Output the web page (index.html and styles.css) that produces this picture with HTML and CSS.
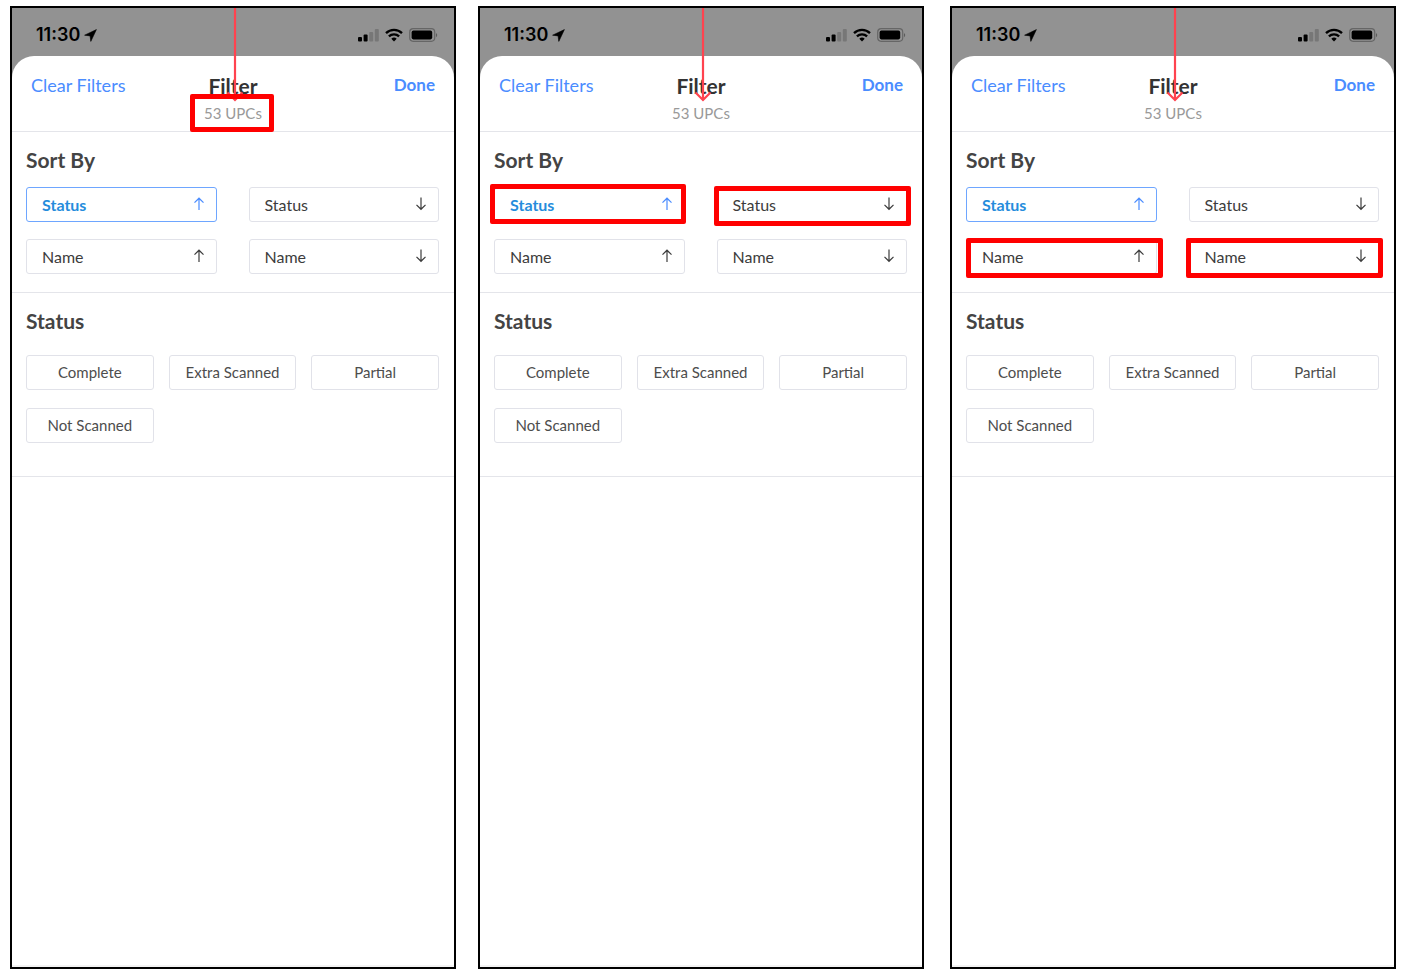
FILE: index.html
```html
<!DOCTYPE html>
<html lang="en">
<head>
<meta charset="utf-8">
<title>Filter</title>
<link rel="stylesheet" href="styles.css">
</head>
<body>
<svg class="defs" aria-hidden="true">
  <symbol id="up" viewBox="0 0 12 14"><path d="M6 13V1.5M1.5 5.6L6 1.2l4.500 4.400" fill="none" stroke="currentColor" stroke-width="1.200"/></symbol>
  <symbol id="down" viewBox="0 0 12 14"><path d="M6 .5v11.500M1.500 7.900L6 12.300l4.500-4.400" fill="none" stroke="currentColor" stroke-width="1.200"/></symbol>
  <symbol id="location" viewBox="0 0 13 13"><path d="M12.400.6L.6 6.200l5.500.7.7 5.500z" fill="currentColor" stroke="currentColor" stroke-width=".6" stroke-linejoin="round"/></symbol>
  <symbol id="signal" viewBox="0 0 21 14"><rect x="0" y="9" width="4" height="4.500" rx="1"/><rect x="5.600" y="6.500" width="4" height="7" rx="1"/><g fill="#777"><rect x="11.200" y="4" width="4" height="9.500" rx="1"/><rect x="16.800" y="1" width="4" height="12.500" rx="1"/></g></symbol>
  <symbol id="wifi" viewBox="0 0 18 14"><path d="M1 5.200a11.500 11.500 0 0 1 16 0M3.900 8.400a7.300 7.300 0 0 1 10.200 0" fill="none" stroke="currentColor" stroke-width="2.300"/><path d="M6.300 10.800a4 4 0 0 1 5.400 0L9 13.600z"/></symbol>
  <symbol id="battery" viewBox="0 0 29 14"><rect x=".7" y=".7" width="25" height="12.600" rx="3.500" fill="none" stroke="#666" stroke-width="1.200"/><rect x="2.600" y="2.600" width="20.600" height="8.800" rx="1.800"/><path d="M27 5v4.200c1.600-.8 1.600-3.400 0-4.200z" fill="#5c5c5c"/></symbol>
  <symbol id="pull" viewBox="0 0 20 94"><path d="M10 0v92M2.500 84.500L10 92l7.500-7.500" fill="none" stroke="#ff434f" stroke-width="2.200"/></symbol>
</svg>
<main class="screens">
  <section class="phone">
    <div class="statusbar"><span class="clock">11:30</span><svg class="i-location"><use href="#location"/></svg><svg class="i-signal"><use href="#signal"/></svg><svg class="i-wifi"><use href="#wifi"/></svg><svg class="i-battery"><use href="#battery"/></svg></div>
    <svg class="pull"><use href="#pull"/></svg>
    <div class="sheet">
      <header class="header">
        <button class="clear">Clear Filters</button>
        <div class="heading"><h1>Filter</h1><p>53 UPCs<span class="mark mark-count"></span></p></div>
        <button class="done">Done</button>
      </header>
      <div class="sort">
        <h2>Sort By</h2>
        <div class="sort-grid">
          <button class="option selected" aria-pressed="true">Status<svg><use href="#up"/></svg></button>
          <button class="option">Status<svg><use href="#down"/></svg></button>
          <button class="option">Name<svg><use href="#up"/></svg></button>
          <button class="option">Name<svg><use href="#down"/></svg></button>
        </div>
      </div>
      <div class="status">
        <h2>Status</h2>
        <div class="chips"><button class="chip">Complete</button><button class="chip">Extra Scanned</button><button class="chip">Partial</button><button class="chip">Not Scanned</button></div>
      </div>
    </div>
  </section>
  <section class="phone">
    <div class="statusbar"><span class="clock">11:30</span><svg class="i-location"><use href="#location"/></svg><svg class="i-signal"><use href="#signal"/></svg><svg class="i-wifi"><use href="#wifi"/></svg><svg class="i-battery"><use href="#battery"/></svg></div>
    <svg class="pull"><use href="#pull"/></svg>
    <div class="sheet">
      <header class="header">
        <button class="clear">Clear Filters</button>
        <div class="heading"><h1>Filter</h1><p>53 UPCs</p></div>
        <button class="done">Done</button>
      </header>
      <div class="sort">
        <h2>Sort By</h2>
        <div class="sort-grid">
          <button class="option selected" aria-pressed="true">Status<svg><use href="#up"/></svg><span class="mark mark-selected"></span></button>
          <button class="option">Status<svg><use href="#down"/></svg><span class="mark mark-right"></span></button>
          <button class="option">Name<svg><use href="#up"/></svg></button>
          <button class="option">Name<svg><use href="#down"/></svg></button>
        </div>
      </div>
      <div class="status">
        <h2>Status</h2>
        <div class="chips"><button class="chip">Complete</button><button class="chip">Extra Scanned</button><button class="chip">Partial</button><button class="chip">Not Scanned</button></div>
      </div>
    </div>
  </section>
  <section class="phone">
    <div class="statusbar"><span class="clock">11:30</span><svg class="i-location"><use href="#location"/></svg><svg class="i-signal"><use href="#signal"/></svg><svg class="i-wifi"><use href="#wifi"/></svg><svg class="i-battery"><use href="#battery"/></svg></div>
    <svg class="pull"><use href="#pull"/></svg>
    <div class="sheet">
      <header class="header">
        <button class="clear">Clear Filters</button>
        <div class="heading"><h1>Filter</h1><p>53 UPCs</p></div>
        <button class="done">Done</button>
      </header>
      <div class="sort">
        <h2>Sort By</h2>
        <div class="sort-grid">
          <button class="option selected" aria-pressed="true">Status<svg><use href="#up"/></svg></button>
          <button class="option">Status<svg><use href="#down"/></svg></button>
          <button class="option">Name<svg><use href="#up"/></svg><span class="mark mark-left"></span></button>
          <button class="option">Name<svg><use href="#down"/></svg><span class="mark mark-right"></span></button>
        </div>
      </div>
      <div class="status">
        <h2>Status</h2>
        <div class="chips"><button class="chip">Complete</button><button class="chip">Extra Scanned</button><button class="chip">Partial</button><button class="chip">Not Scanned</button></div>
      </div>
    </div>
  </section>
</main>
</body>
</html>
```
FILE: styles.css
```css
* { box-sizing: border-box; }
body { margin: 0; background: #fff; color: #444; font-family: Lato, "Open Sans", sans-serif; }
h1, h2, p { margin: 0; }
button { font: inherit; color: inherit; background: none; border: 0; padding: 0; cursor: pointer; }
svg { display: block; flex: none; }
.defs { position: absolute; width: 0; height: 0; }

.screens { display: flex; gap: 22px; min-height: 100vh; padding: 6px 8px 11px 10px; }
.phone { position: relative; flex: 1; display: flex; flex-direction: column; border: 2px solid #000; background: #929292; }
.phone:last-child { margin-left: 4px; }

.statusbar { display: flex; align-items: center; height: 48px; padding: 6px 16px 0 24px; color: #000; }
.clock { font: 600 18px/20px Inter, sans-serif; }
.i-location { width: 13px; height: 13px; margin-left: 4px; }
.i-signal { width: 21px; height: 14px; margin-left: auto; }
.i-wifi { width: 18px; height: 14px; margin-left: 6px; }
.i-battery { width: 29px; height: 14px; margin-left: 6px; }

.pull { position: absolute; z-index: 1; top: 0; left: 50%; width: 20px; height: 94px; margin-left: -8px; }

.sheet { flex: 1; background: #fff; border-radius: 22px 22px 0 0; border-bottom: 2px solid #f3f3f3; }
.header { display: grid; grid-template-columns: 1fr auto 1fr; align-items: start; height: 76px; padding: 17px 19px 0; border-bottom: 1px solid #e4e5ea; }
.clear, .done { line-height: 24px; color: #4a8cff; }
.clear { justify-self: start; font-size: 18px; }
.done { justify-self: end; font-size: 17px; font-weight: 700; }
.heading { text-align: center; }
.heading h1 { font-size: 21px; line-height: 26px; color: #333; }
.heading p { position: relative; font-size: 15px; line-height: 28px; color: #999; }

.sort, .status { border-bottom: 1px solid #e4e5ea; }
.sort { padding: 16px 15px 18px 14px; }
.status { padding: 16px 15px 33px 14px; }
h2 { font-size: 21px; line-height: 24px; }
.sort-grid { display: grid; grid-template-columns: 1fr 1fr; gap: 17px 32px; margin-top: 15px; }
.option, .chip { height: 35px; border: 1px solid #e1e2e9; border-radius: 3px; }
.option { position: relative; z-index: 0; display: flex; align-items: center; justify-content: space-between; padding: 0 11px 1px 15px; font-size: 16px; color: #3c3c3c; }
.option svg { width: 12px; height: 14px; }
.selected { border-color: #6ea6ff; color: #258cdc; font-weight: 700; }
.selected svg { color: #4a8cff; }
.chips { display: grid; grid-template-columns: repeat(3, 1fr); gap: 18px 15px; margin-top: 22px; }
.chip { padding-bottom: 2px; font-size: 15px; color: #4d4d4d; }

.mark { position: absolute; z-index: 2; border: 5px solid #f00; border-radius: 2px; pointer-events: none; }
.mark-count { width: 84px; height: 38px; top: -5px; left: 50%; margin-left: -43px; }
.mark-selected { inset: -4px -2px -3px -5px; }
.mark-left { inset: -2px -7px -5px -1px; }
.mark-right { inset: -2px -5px -5px -4px; }
```
